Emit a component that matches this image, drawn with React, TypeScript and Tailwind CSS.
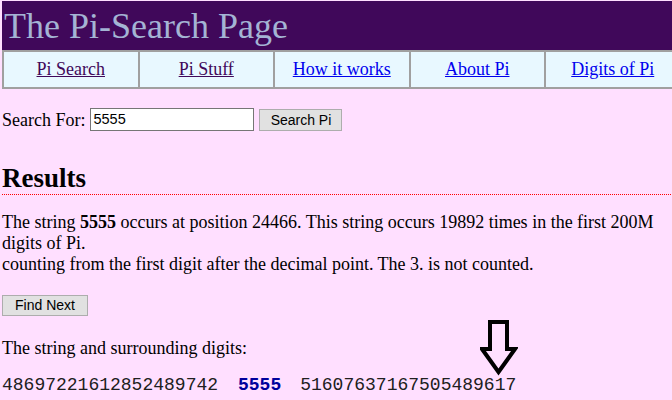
import React from "react";

const navItems = [
  { label: "Pi Search", visited: true },
  { label: "Pi Stuff", visited: true },
  { label: "How it works", visited: false },
  { label: "About Pi", visited: false },
  { label: "Digits of Pi", visited: false },
];

export default function App() {
  return (
    <div
      className="relative w-[672px] h-[400px] overflow-hidden bg-[#ffdfff] text-black pt-[1px]"
      style={{ fontFamily: '"Liberation Serif", "Times New Roman", serif' }}
    >
      {/* Header */}
      <div className="ml-[2px] h-[49px] bg-[#40085a] pt-[5px] pl-[2px]">
        <div className="text-[36px] leading-[40px] text-[#a4b4d4] whitespace-nowrap">
          The Pi-Search Page
        </div>
      </div>

      {/* Nav */}
      <div className="ml-[2px] flex w-[700px] h-[39px] border-t-2 border-b-2 border-t-[#a0a0a0] border-b-[#a0a0a0] bg-[#e8f8ff]">
        {navItems.map((item) => (
          <div
            key={item.label}
            className="w-[135.5px] shrink-0 border-l-2 border-l-[#a0a0a0] flex items-center justify-center"
          >
            <a
              href="#"
              className={
                "text-[18px] leading-[21px] underline whitespace-nowrap " +
                (item.visited ? "text-[#40085a]" : "text-[#0000ee]")
              }
            >
              {item.label}
            </a>
          </div>
        ))}
      </div>

      <div className="pl-[2px]">
        {/* Search row */}
        <div className="mt-[19px] flex items-end h-[23px]">
          <span className="text-[18px] leading-[21px] whitespace-nowrap">Search For:</span>
          <div
            className="ml-[5px] w-[164px] h-[23px] bg-white border border-[#767676] pl-[2px] flex items-center text-[14.5px]"
            style={{ fontFamily: '"Liberation Sans", Arial, sans-serif' }}
          >
            5555
          </div>
          <button
            className="ml-[5px] w-[83px] h-[22px] bg-[#e1e1e1] border border-[#adadad] text-[14px] leading-[20px] text-black"
            style={{ fontFamily: '"Liberation Sans", Arial, sans-serif' }}
          >
            Search Pi
          </button>
        </div>

        {/* Results heading */}
        <div className="mt-[32px]">
          <h2 className="text-[27px] leading-[31px] font-bold">Results</h2>
          <div className="h-[1px] mr-[-4px] bg-[repeating-linear-gradient(90deg,#ff0000_0px,#ff0000_1px,transparent_1px,transparent_2px)]" />
        </div>

        {/* Paragraph */}
        <p className="mt-[17px] text-[18px] leading-[21px] whitespace-nowrap">
          The string <b>5555</b> occurs at position 24466. This string occurs 19892 times in the first 200M
          <br />
          digits of Pi.
          <br />
          counting from the first digit after the decimal point. The 3. is not counted.
        </p>

        {/* Find Next */}
        <button
          className="mt-[20px] block w-[86px] h-[21px] bg-[#e1e1e1] border border-[#adadad] text-[14px] leading-[19px] text-black"
          style={{ fontFamily: '"Liberation Sans", Arial, sans-serif' }}
        >
          Find Next
        </button>

        <p className="mt-[22px] text-[18px] leading-[21px]">The string and surrounding digits:</p>

        <div
          className="mt-[16px] flex text-[18px] leading-[21px] whitespace-nowrap"
          style={{ fontFamily: '"Liberation Mono", "Courier New", monospace' }}
        >
          <span className="w-[216px] text-[#202020]">48697221612852489742</span>
          <span className="ml-[20px] font-bold text-[#00009c]">5555</span>
          <span className="ml-[19px] text-[#202020]">51607637167505489617</span>
        </div>
      </div>

      {/* Arrow */}
      <svg
        className="absolute left-[480px] top-[320px]"
        width="38"
        height="56"
        viewBox="0 0 38 56"
      >
        <polygon
          points="10,2 27,2 27,29 35,29 18.5,52 2,29 10,29"
          fill="none"
          stroke="#000"
          strokeWidth="4"
          strokeLinejoin="miter"
        />
      </svg>
    </div>
  );
}
